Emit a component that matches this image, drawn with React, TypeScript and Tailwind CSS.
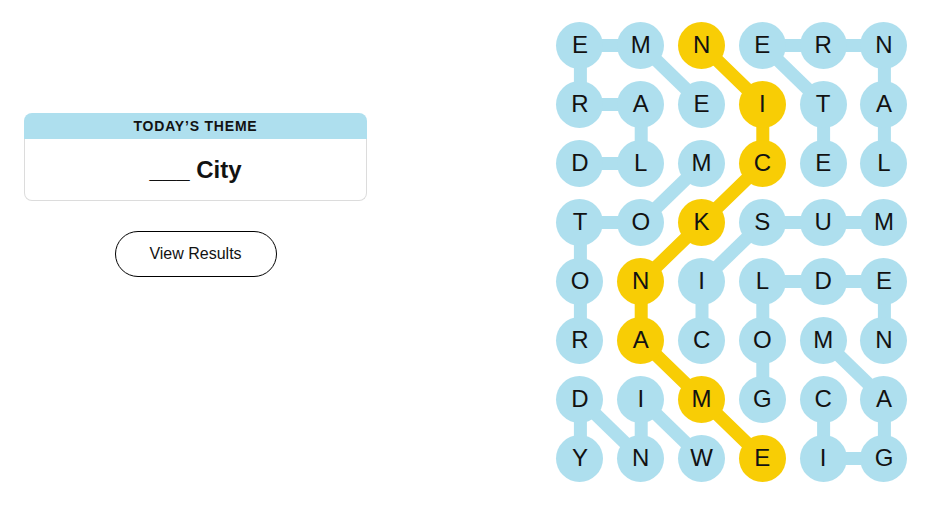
const letters = [
  "EMNERN",
  "RAEITA",
  "DLMCEL",
  "TOKSUM",
  "ONILDE",
  "RACOMN",
  "DIMGCA",
  "YNWEIG",
]

// theme word links, [row, col] pairs
const blueLinks: [number, number, number, number][] = [
  [0, 0, 0, 1], [0, 0, 1, 0], [0, 1, 1, 2], [1, 0, 1, 1], [1, 1, 2, 1], [2, 0, 2, 1],
  [2, 2, 3, 1], [3, 0, 3, 1], [3, 0, 4, 0], [4, 0, 5, 0],
  [0, 3, 0, 4], [0, 4, 0, 5], [0, 3, 1, 4], [0, 5, 1, 5], [1, 4, 2, 4], [1, 5, 2, 5],
  [3, 3, 3, 4], [3, 4, 3, 5], [3, 3, 4, 2], [4, 2, 5, 2],
  [4, 3, 4, 4], [4, 4, 4, 5], [4, 3, 5, 3], [4, 5, 5, 5], [5, 3, 6, 3],
  [5, 4, 6, 5], [6, 5, 7, 5], [7, 4, 7, 5], [6, 4, 7, 4],
  [6, 0, 7, 0], [6, 0, 7, 1], [6, 1, 7, 1], [6, 1, 7, 2],
]

// spangram: NICKNAME
const spangram: [number, number][] = [
  [0, 2], [1, 3], [2, 3], [3, 2], [4, 1], [5, 1], [6, 2], [7, 3],
]

const CELL_W = 60.8
const CELL_H = 59
const cx = (c: number) => c * CELL_W + CELL_W / 2
const cy = (r: number) => r * CELL_H + CELL_H / 2

const isSpan = (r: number, c: number) => spangram.some(([sr, sc]) => sr === r && sc === c)

function Board() {
  return (
    <div className="relative w-[364.8px] h-[472px]">
      <svg className="absolute inset-0" width={364.8} height={472}>
        {blueLinks.map(([r1, c1, r2, c2], i) => (
          <line key={i} x1={cx(c1)} y1={cy(r1)} x2={cx(c2)} y2={cy(r2)} stroke="#aedfee" strokeWidth={13} />
        ))}
        <polyline
          points={spangram.map(([r, c]) => `${cx(c)},${cy(r)}`).join(" ")}
          fill="none"
          stroke="#f8cd05"
          strokeWidth={13}
          strokeLinejoin="round"
        />
      </svg>
      <div className="relative grid grid-cols-6">
        {letters.map((row, r) =>
          row.split("").map((ch, c) => (
            <div key={`${r}-${c}`} className="w-[60.8px] h-[59px] flex items-center justify-center">
              <div
                className={
                  "w-[47px] h-[47px] rounded-full flex items-center justify-center text-[24px] text-[#121212] " +
                  (isSpan(r, c) ? "bg-[#f8cd05]" : "bg-[#aedfee]")
                }
              >
                {ch}
              </div>
            </div>
          ))
        )}
      </div>
    </div>
  )
}

export default function App() {
  return (
    <div className="w-[934px] h-[525px] bg-white flex font-['Liberation_Sans',Arial,sans-serif] text-[#121212]">
      <div className="w-[343px] ml-[24px] pt-[113px] flex flex-col">
        <div className="h-[26px] bg-[#aedfee] rounded-t-[8px] flex items-center justify-center text-[14px] font-bold tracking-[0.8px] uppercase">
          Today’s Theme
        </div>
        <div className="h-[62px] border-x border-b border-[#dcdcdc] rounded-b-[8px] flex items-center justify-center text-[24px] font-bold">
          ___ City
        </div>
        <button className="mt-[30px] mx-auto w-[162px] h-[46px] rounded-full border border-black bg-white text-[16px]">
          View Results
        </button>
      </div>
      <div className="ml-[182.6px] pt-[15.5px]">
        <Board />
      </div>
    </div>
  )
}
